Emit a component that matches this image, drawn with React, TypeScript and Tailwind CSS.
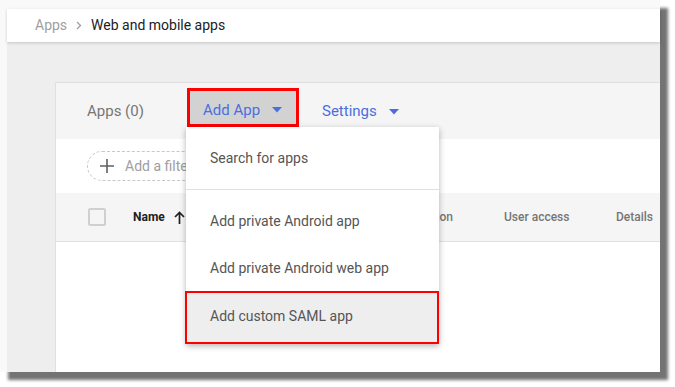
import React from "react";

function Caret() {
  return (
    <svg width="10" height="6" viewBox="0 0 10 6" className="ml-[12px]">
      <path d="M0 0 L10 0 L5 5.5 Z" fill="#4a6ee0" />
    </svg>
  );
}

export default function App() {
  return (
    <div className="w-[675px] h-[387px] bg-white overflow-hidden" style={{ fontFamily: "Roboto, 'Noto Sans', sans-serif" }}>
      <div className="w-[660px] h-[372px] bg-[#f9f9f9] shadow-[8px_8px_3px_rgba(0,0,0,0.55)] flex flex-col pl-[7px] pt-[9px]">
        <div className="h-[33px] bg-white shadow-[0_1px_3px_rgba(0,0,0,0.18)] flex items-center pl-[28px] relative z-10 text-[14px]">
          <span className="text-[#9e9e9e]">Apps</span>
          <svg width="6" height="9" viewBox="0 0 6 9" className="ml-[9px] mr-[9px]">
            <path d="M1 1 L4.5 4.5 L1 8" stroke="#9e9e9e" strokeWidth="1.3" fill="none" />
          </svg>
          <span className="text-[#202124]">Web and mobile apps</span>
        </div>
        <div className="flex-1 bg-[#eeeeee] pt-[40px] pl-[48px] flex">
          <div className="flex-1 bg-white border-l border-t border-[#e0e0e0] relative flex flex-col">
            <div className="h-[56px] bg-[#f5f5f5] flex pl-[31px] text-[15px]">
              <span className="w-[100px] text-[#757575] self-center pt-[1px]">Apps (0)</span>
              <div className="mt-[5px] w-[112px] h-[39px] border-[3px] border-[#ff0000] bg-[#d2d2d2] flex items-center pl-[13px] pt-[5px] text-[#4a6ee0]">
                Add App
                <Caret />
              </div>
              <div className="ml-[23px] flex items-center pt-[1px] text-[#4a6ee0]">
                Settings
                <Caret />
              </div>
            </div>
            <div className="h-[54px] bg-white flex items-center pl-[31px]">
              <div className="h-[30px] w-[150px] rounded-full border border-dashed border-[#c8c8c8] flex items-center pl-[12px] text-[14px] text-[#9e9e9e]">
                <svg width="14" height="14" viewBox="0 0 14 14" className="mr-[11px]">
                  <path d="M7 0 V14 M0 7 H14" stroke="#616161" strokeWidth="1.6" />
                </svg>
                Add a filter
              </div>
            </div>
            <div className="h-[49px] bg-[#f5f5f5] border-b border-[#e0e0e0] flex items-center pl-[32px] text-[12px]">
              <div className="w-[18px] h-[18px] border-2 border-[#d0d0d0] rounded-[2px] bg-[#f5f5f5]" />
              <div className="ml-[27px] w-[150px] flex items-center">
                <span className="font-bold text-[#212121]">Name</span>
                <svg width="11" height="13" viewBox="0 0 11 13" className="ml-[9px]">
                  <path d="M5.5 1.5 V13 M1 6 L5.5 1.5 L10 6" stroke="#212121" strokeWidth="1.7" fill="none" />
                </svg>
              </div>
              <span className="w-[170px] text-right text-[#757575] font-medium">Authentication</span>
              <span className="ml-[51px] w-[112px] text-[#757575] font-medium">User access</span>
              <span className="text-[#757575] font-medium">Details</span>
            </div>
            <div className="flex-1 bg-white" />

            <div className="absolute left-[130px] top-[44px] w-[253px] bg-white shadow-[0_2px_6px_rgba(0,0,0,0.3)] text-[14px] text-[#555555] flex flex-col z-10">
              <div className="h-[63px] flex items-center pl-[24px] pt-[1px] border-b border-[#e0e0e0]">Search for apps</div>
              <div className="pt-[6px] flex flex-col">
                <div className="h-[48px] flex items-center pl-[24px] pt-[2px]">Add private Android app</div>
                <div className="h-[47px] flex items-center pl-[24px] pt-[2px]">Add private Android web app</div>
                <div className="h-[53px] -ml-[1px] border-2 border-[#ff0000] bg-[#eeeeee] flex items-center pl-[23px] pb-[2px]">Add custom SAML app</div>
              </div>
            </div>
          </div>
        </div>
      </div>
    </div>
  );
}
